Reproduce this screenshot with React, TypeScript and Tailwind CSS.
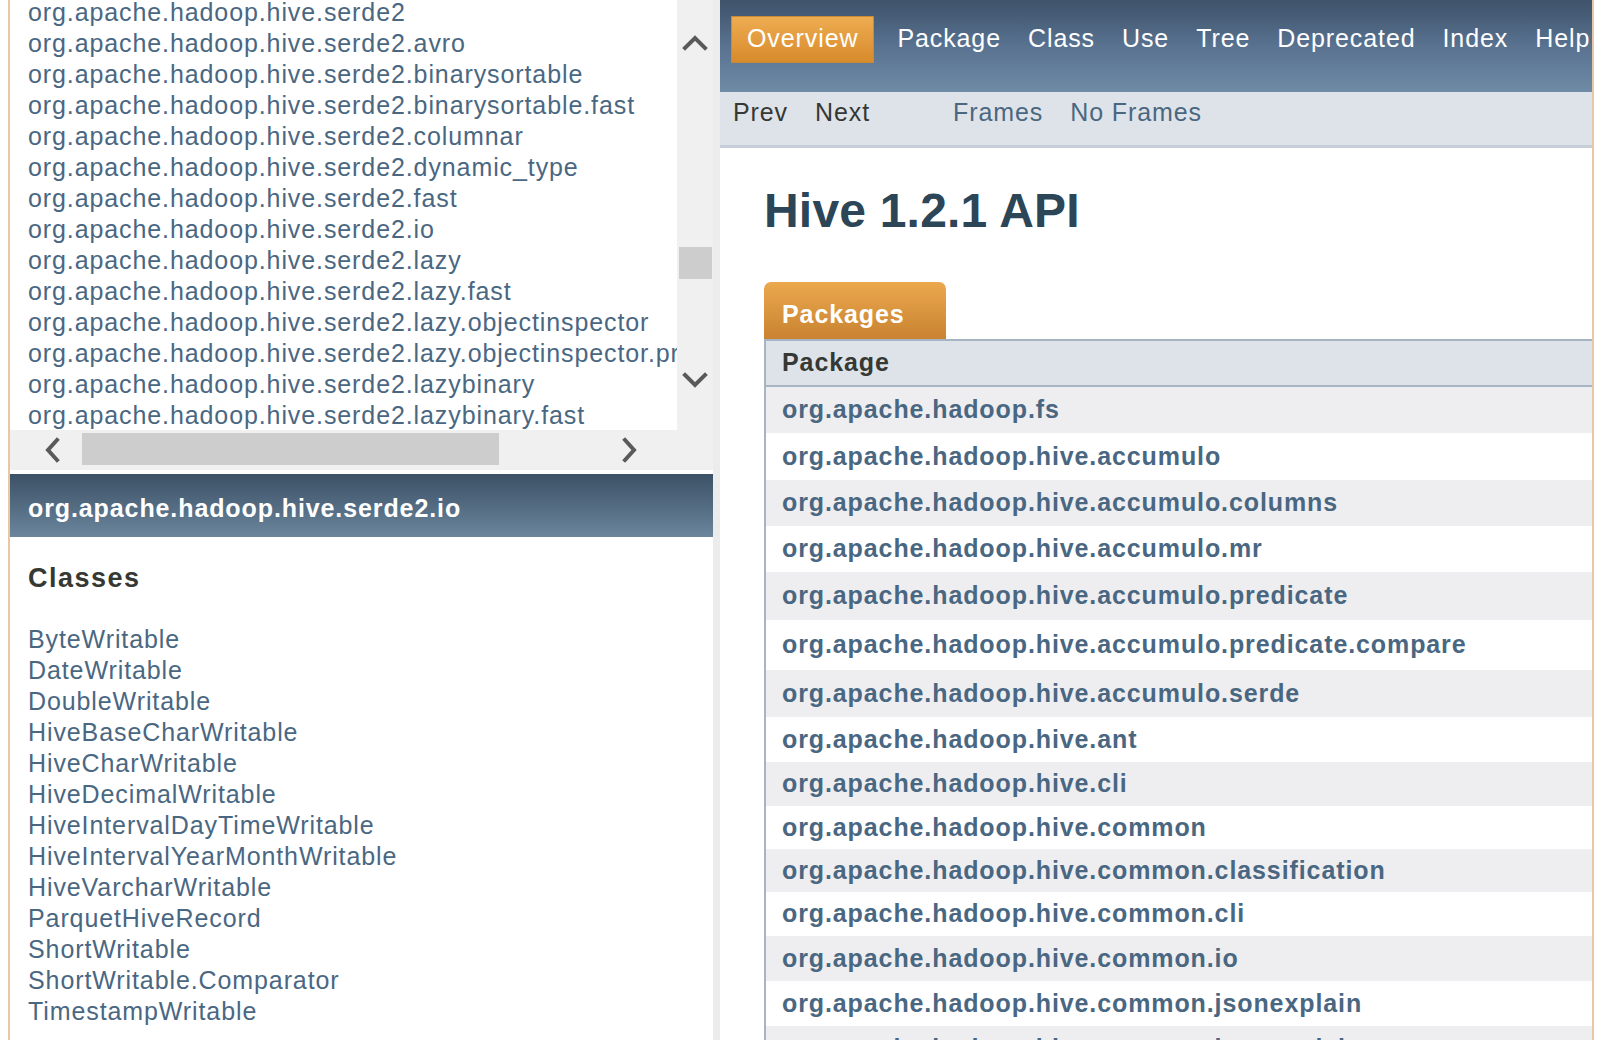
import React from 'react';

const frameList = [
  'org.apache.hadoop.hive.serde2',
  'org.apache.hadoop.hive.serde2.avro',
  'org.apache.hadoop.hive.serde2.binarysortable',
  'org.apache.hadoop.hive.serde2.binarysortable.fast',
  'org.apache.hadoop.hive.serde2.columnar',
  'org.apache.hadoop.hive.serde2.dynamic_type',
  'org.apache.hadoop.hive.serde2.fast',
  'org.apache.hadoop.hive.serde2.io',
  'org.apache.hadoop.hive.serde2.lazy',
  'org.apache.hadoop.hive.serde2.lazy.fast',
  'org.apache.hadoop.hive.serde2.lazy.objectinspector',
  'org.apache.hadoop.hive.serde2.lazy.objectinspector.primitive',
  'org.apache.hadoop.hive.serde2.lazybinary',
  'org.apache.hadoop.hive.serde2.lazybinary.fast',
];

const classNames = [
  'ByteWritable',
  'DateWritable',
  'DoubleWritable',
  'HiveBaseCharWritable',
  'HiveCharWritable',
  'HiveDecimalWritable',
  'HiveIntervalDayTimeWritable',
  'HiveIntervalYearMonthWritable',
  'HiveVarcharWritable',
  'ParquetHiveRecord',
  'ShortWritable',
  'ShortWritable.Comparator',
  'TimestampWritable',
];

// row heights follow the screenshot, which is not perfectly even
const packages = [
  { name: 'org.apache.hadoop.fs', h: 'h-[46px]' },
  { name: 'org.apache.hadoop.hive.accumulo', h: 'h-[47px]' },
  { name: 'org.apache.hadoop.hive.accumulo.columns', h: 'h-[46px]' },
  { name: 'org.apache.hadoop.hive.accumulo.mr', h: 'h-[46px]' },
  { name: 'org.apache.hadoop.hive.accumulo.predicate', h: 'h-[48px]' },
  { name: 'org.apache.hadoop.hive.accumulo.predicate.compare', h: 'h-[50px]' },
  { name: 'org.apache.hadoop.hive.accumulo.serde', h: 'h-[47px]' },
  { name: 'org.apache.hadoop.hive.ant', h: 'h-[45px]' },
  { name: 'org.apache.hadoop.hive.cli', h: 'h-[44px]' },
  { name: 'org.apache.hadoop.hive.common', h: 'h-[43px]' },
  { name: 'org.apache.hadoop.hive.common.classification', h: 'h-[43px]' },
  { name: 'org.apache.hadoop.hive.common.cli', h: 'h-[44px]' },
  { name: 'org.apache.hadoop.hive.common.io', h: 'h-[45px]' },
  { name: 'org.apache.hadoop.hive.common.jsonexplain', h: 'h-[45px]' },
  { name: 'org.apache.hadoop.hive.common.jsonexplain.tez', h: 'h-[46px]' },
];

const navItems = ['Package', 'Class', 'Use', 'Tree', 'Deprecated', 'Index', 'Help'];

const Chevron: React.FC<{ dir: 'up' | 'down' | 'left' | 'right' }> = ({ dir }) => {
  if (dir === 'up' || dir === 'down') {
    const d = dir === 'up' ? 'M3 14 L13 4 L23 14' : 'M3 4 L13 14 L23 4';
    return (
      <svg width="26" height="18" viewBox="0 0 26 18" fill="none">
        <path d={d} stroke="#5a5a5a" strokeWidth="4" strokeLinejoin="miter" strokeLinecap="square" />
      </svg>
    );
  }
  const d = dir === 'left' ? 'M13 3 L4 13 L13 23' : 'M4 3 L13 13 L4 23';
  return (
    <svg width="18" height="26" viewBox="0 0 18 26" fill="none">
      <path d={d} stroke="#5a5a5a" strokeWidth="4" strokeLinejoin="miter" strokeLinecap="square" />
    </svg>
  );
};

const App: React.FC = () => {
  return (
    <div className="w-[1598px] h-[1040px] overflow-hidden flex bg-white font-['Liberation_Sans',Arial,sans-serif] text-[25px] tracking-[0.9px]">
      <div className="w-[8px] shrink-0 bg-white" />
      <div className="w-[2px] shrink-0 bg-[#e6c7a6]" />

      {/* left frames */}
      <div className="w-[703px] shrink-0 flex flex-col bg-white">
        <div className="h-[430px] flex">
          <div className="w-[667px] overflow-hidden bg-white">
            <ul className="-mt-[3px] pl-[18px] leading-[31px] whitespace-nowrap text-[#4a6782]">
              {frameList.map((p) => (
                <li key={p}>{p}</li>
              ))}
            </ul>
          </div>
          <div className="w-[36px] bg-[#f0f0f0] relative">
            <div className="absolute left-[5px] top-[34px]">
              <Chevron dir="up" />
            </div>
            <div className="absolute left-[2px] top-[247px] w-[33px] h-[32px] bg-[#cdcdcd]" />
            <div className="absolute left-[5px] top-[371px]">
              <Chevron dir="down" />
            </div>
          </div>
        </div>
        <div className="h-[40px] flex bg-[#f0f0f0]">
          <div className="w-[667px] relative">
            <div className="absolute left-[34px] top-[7px]">
              <Chevron dir="left" />
            </div>
            <div className="absolute left-[72px] top-[3px] w-[417px] h-[32px] bg-[#cdcdcd]" />
            <div className="absolute left-[611px] top-[7px]">
              <Chevron dir="right" />
            </div>
          </div>
          <div className="w-[36px]" />
        </div>
        <div className="h-[4px] bg-white" />
        <div className="h-[63px] flex items-center pl-[18px] pt-[6px] bg-gradient-to-b from-[#3c5166] to-[#6b869d] text-white font-bold whitespace-nowrap">
          org.apache.hadoop.hive.serde2.io
        </div>
        <div className="pl-[18px] pt-[25px]">
          <h2 className="text-[27px] leading-[32px] font-bold tracking-[1.5px] text-[#353833]">Classes</h2>
          <ul className="mt-[30px] leading-[31px] text-[#4a6782]">
            {classNames.map((c) => (
              <li key={c}>{c}</li>
            ))}
          </ul>
        </div>
      </div>

      <div className="w-[7px] shrink-0 bg-[#ececec]" />

      {/* right frame */}
      <div className="w-[872px] shrink-0 flex flex-col bg-white overflow-hidden">
        <div className="h-[92px] shrink-0 flex items-start pt-[16px] pl-[11px] bg-gradient-to-b from-[#3f536a] via-[#587290] to-[#6f8ba5] whitespace-nowrap">
          <div className="h-[47px] px-[15px] pb-[1px] flex items-center border border-[#c88a35] bg-gradient-to-b from-[#eeac50] to-[#d78b2c] text-white">
            Overview
          </div>
          <div className="ml-[23px] h-[45px] flex items-center gap-[27px] text-white">
            {navItems.map((n) => (
              <span key={n}>{n}</span>
            ))}
          </div>
        </div>
        <div className="h-[56px] shrink-0 flex items-center pl-[13px] pb-[11px] bg-[#dee3e9] border-b-[3px] border-[#c6ced8] whitespace-nowrap">
          <span className="text-[#353833]">Prev</span>
          <span className="ml-[27px] text-[#353833]">Next</span>
          <span className="ml-[83px] text-[#4a6782]">Frames</span>
          <span className="ml-[27px] text-[#4a6782]">No Frames</span>
        </div>

        <div className="pl-[44px]">
          <h1 className="mt-[34px] text-[48px] leading-[57px] font-bold tracking-[0.2px] text-[#2c4557]">Hive 1.2.1 API</h1>
          <div className="mt-[43px] w-[182px] h-[57px] pt-[18px] pl-[18px] rounded-t-[7px] bg-gradient-to-b from-[#eca84d] to-[#c98331] text-white font-bold leading-[28px]">
            Packages
          </div>
          <div className="border-l-2 border-[#a7b4c4]">
            <div className="h-[48px] flex items-center pl-[16px] bg-[#dee3e9] border-y-2 border-[#a7b4c4] font-bold text-[#353833]">
              Package
            </div>
            {packages.map((p, i) => (
              <div
                key={p.name}
                className={`${p.h} flex items-center pl-[16px] whitespace-nowrap font-bold text-[#4a6782] ${i % 2 === 0 ? 'bg-[#eeeef1]' : 'bg-white'}`}
              >
                {p.name}
              </div>
            ))}
          </div>
        </div>
      </div>

      <div className="w-[2px] shrink-0 bg-[#e6c7a6]" />
      <div className="flex-1 bg-white" />
    </div>
  );
};

export default App;
